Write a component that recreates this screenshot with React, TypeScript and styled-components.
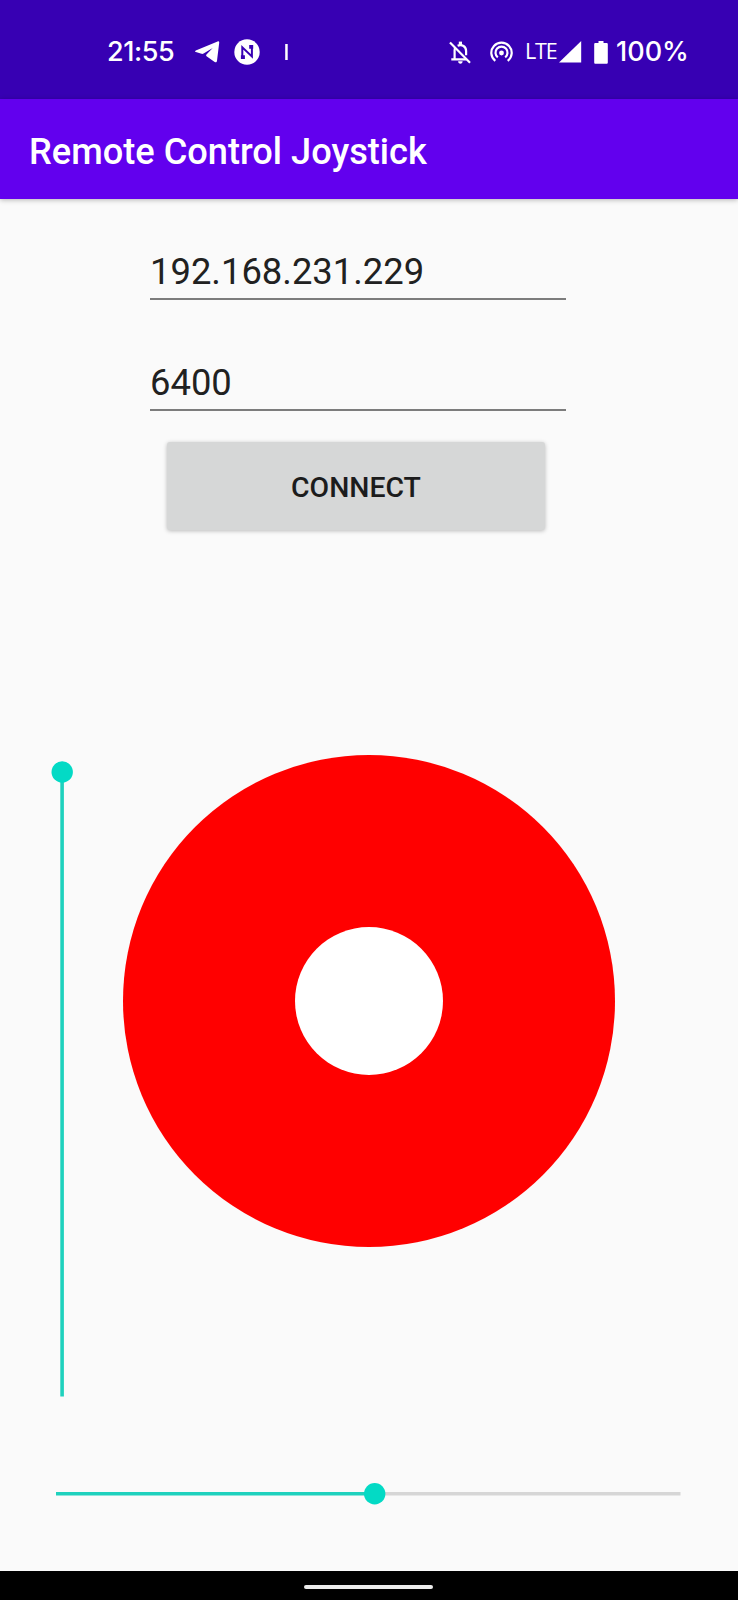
import React from 'react';
import styled, { createGlobalStyle } from 'styled-components';

const GlobalStyle = createGlobalStyle`
  * { box-sizing: border-box; }
  body { margin: 0; background: #fafafa; font-family: Roboto, "Liberation Sans", sans-serif; }
`;

const Screen = styled.div`
  display: flex;
  flex-direction: column;
  width: 738px;
  height: 1600px;
  overflow: hidden;
  background: #fafafa;
`;

const StatusBar = styled.header`
  display: flex;
  justify-content: space-between;
  height: 99px;
  padding: 5px 47px 0 107px;
  background: #3700b3;
  color: #fff;
  flex: none;
`;

const StatusGroup = styled.div`
  display: flex;
  align-items: center;
`;

const StatusText = styled.span<{ $width: number; $left?: number; $spacing?: number }>`
  flex: none;
  width: ${(p) => p.$width}px;
  margin-left: ${(p) => p.$left ?? 0}px;
  font: 500 27px/36px Inter, "Open Sans", sans-serif;
  letter-spacing: ${(p) => p.$spacing ?? 0}px;
  white-space: nowrap;
`;

const NetworkText = styled.span`
  flex: none;
  width: 34px;
  margin-left: 12px;
  font: 400 21.5px/30px "Open Sans", "Noto Sans", sans-serif;
  letter-spacing: -1.2px;
  transform: translateY(-1px);
`;

const Glyph = styled.svg<{ $left?: number }>`
  display: block;
  flex: none;
  margin-left: ${(p) => p.$left ?? 0}px;
`;

const AppBar = styled.div`
  display: flex;
  align-items: center;
  flex: none;
  height: 100px;
  padding: 6px 29px 0;
  background: #6200ee;
  box-shadow: 0 1px 5px rgba(0, 0, 0, 0.28);
`;

const Title = styled.h1`
  margin: 0;
  color: #fff;
  font-size: 36.2px;
  font-weight: 500;
  line-height: 42px;
`;

const Content = styled.main`
  flex: 1;
  display: flex;
  flex-direction: column;
`;

const Form = styled.form`
  display: flex;
  flex-direction: column;
  padding: 45px 0 0 150px;
`;

const Field = styled.input`
  width: 416px;
  height: 56px;
  margin-bottom: 55px;
  padding: 0;
  border: 0;
  border-bottom: 2px solid #7c7c7c;
  border-radius: 0;
  outline: none;
  background: transparent;
  color: #212121;
  font: 400 36.4px/42px Roboto, sans-serif;
`;

const ConnectButton = styled.button`
  width: 378px;
  height: 88px;
  margin: -24px 0 0 17px;
  padding: 3px 0 0;
  border: 0;
  border-radius: 3px;
  background: #d6d7d7;
  box-shadow: 0 1px 4px rgba(0, 0, 0, 0.26);
  color: #1c1c1c;
  font: 500 28.4px/34px Roboto, sans-serif;
`;

const Controls = styled.section`
  display: flex;
  align-items: flex-start;
  margin-top: 225px;
  padding-left: 51px;
`;

const Slider = styled.svg`
  display: block;
  flex: none;
`;

const VerticalSlider = styled(Slider)`
  margin-top: 6px;
`;

const Joystick = styled.div`
  display: flex;
  align-items: center;
  justify-content: center;
  width: 492px;
  height: 492px;
  margin-left: 49px;
  border-radius: 50%;
  background: #f00;
`;

const Knob = styled.div`
  width: 148px;
  height: 148px;
  border-radius: 50%;
  background: #fff;
`;

const SteeringRow = styled.div`
  margin-top: 86px;
  padding-left: 56px;
`;

const NavigationBar = styled.footer`
  display: flex;
  justify-content: center;
  flex: none;
  height: 29px;
  padding: 14px 1px 0 0;
  background: #000;
`;

const HomeHandle = styled.div`
  width: 129px;
  height: 4px;
  border-radius: 2px;
  background: #ececec;
`;

const TelegramIcon = () => (
  <Glyph width="25" height="22" viewBox="0 0 25 22" $left={19}>
    <path
      fill="#fff"
      d="M.8 9.6 22.6.5c1.1-.4 1.8.1 1.6 1.3l-2.2 18c-.2 1.5-1.1 1.9-2.3 1.1l-7.8-5.4c-1-.7-1-1.4-.2-2.2l6-6.3-9.1 5.5c-.7.4-1.3.5-2.1.3L.9 11.1c-1-.3-1-1-.1-1.5Z"
    />
  </Glyph>
);

const NewsIcon = () => (
  <Glyph width="26" height="26" viewBox="0 0 26 26" $left={14}>
    <circle cx="13" cy="13" r="12.7" fill="#fff" />
    <path d="M8.3 17.5V8.3l9.6 9.2V9" fill="none" stroke="#3700b3" strokeWidth="2" />
    <path d="M15.2 5.9h4v3.9h-4zM6.9 16.2h4v3.9h-4z" fill="#3700b3" />
  </Glyph>
);

const DividerIcon = () => (
  <Glyph width="3" height="16" viewBox="0 0 3 16" $left={25}>
    <path d="M.2 0h2.5v16H.2z" fill="#fff" />
  </Glyph>
);

const BellOffIcon = () => (
  <Glyph width="22" height="23" viewBox="0 0 22 23">
    <g fill="none" stroke="#fff" strokeWidth="2.2">
      <path d="M1 1.5 21 21.8" />
      <path d="M5.6 18.4V9.5c0-1 .2-2 .7-2.8M2.3 18.3h15M8.6 4.8c4.4-1.9 8.5.7 8.5 5.2v4.3" />
      <path d="M11.4 4V.6" strokeWidth="3.2" />
    </g>
    <path d="M9.1 20.3h4.5c0 1.5-.9 2.4-2.2 2.4s-2.3-.9-2.3-2.4Z" fill="#fff" />
  </Glyph>
);

const HotspotIcon = () => (
  <Glyph width="23" height="22" viewBox="0 0 23 22" $left={19}>
    <g fill="none" stroke="#fff" strokeWidth="2.2">
      <path d="M5.3 19.9a10.2 10.2 0 1 1 12.4 0" />
      <path d="M7.8 16.4a6 6 0 1 1 7.4 0" />
    </g>
    <circle cx="11.5" cy="12" r="2.4" fill="#fff" />
  </Glyph>
);

const SignalIcon = () => (
  <Glyph width="23" height="22" viewBox="0 0 23 22">
    <path d="M22.2 0v21.5H0Z" fill="#fff" />
  </Glyph>
);

const BatteryIcon = () => (
  <Glyph width="14" height="23" viewBox="0 0 14 23" $left={12}>
    <path
      d="M4.5 0h5v2h3c.8 0 1.3.5 1.3 1.3v18.2c0 .8-.5 1.3-1.3 1.3h-11c-.8 0-1.3-.5-1.3-1.3V3.3C.2 2.5.7 2 1.5 2h3Z"
      fill="#fff"
    />
  </Glyph>
);

export default function App() {
  return (
    <>
      <GlobalStyle />
      <Screen>
        <StatusBar>
          <StatusGroup>
            <StatusText $width={69} $spacing={-0.4}>21:55</StatusText>
            <TelegramIcon />
            <NewsIcon />
            <DividerIcon />
          </StatusGroup>
          <StatusGroup>
            <BellOffIcon />
            <HotspotIcon />
            <NetworkText>LTE</NetworkText>
            <SignalIcon />
            <BatteryIcon />
            <StatusText $width={75} $left={8}>100%</StatusText>
          </StatusGroup>
        </StatusBar>
        <AppBar>
          <Title>Remote Control Joystick</Title>
        </AppBar>
        <Content>
          <Form onSubmit={(e) => e.preventDefault()}>
            <Field aria-label="IP address" defaultValue="192.168.231.229" />
            <Field aria-label="Port" defaultValue="6400" />
            <ConnectButton type="submit">CONNECT</ConnectButton>
          </Form>
          <Controls>
            <VerticalSlider width="23" height="636" viewBox="0 0 23 636">
              <path d="M9.3 11h3.6v624.5H9.3z" fill="#1fd1bd" />
              <circle cx="11.2" cy="11" r="10.7" fill="#03dac5" />
            </VerticalSlider>
            <Joystick>
              <Knob />
            </Joystick>
          </Controls>
          <SteeringRow>
            <Slider width="625" height="22" viewBox="0 0 625 22">
              <path d="M318 9h306.5v3.5H318z" fill="#d6d6d6" />
              <path d="M0 9h318v3.5H0z" fill="#1fd1bd" />
              <circle cx="318.7" cy="10.8" r="10.7" fill="#03dac5" />
            </Slider>
          </SteeringRow>
        </Content>
        <NavigationBar>
          <HomeHandle />
        </NavigationBar>
      </Screen>
    </>
  );
}
